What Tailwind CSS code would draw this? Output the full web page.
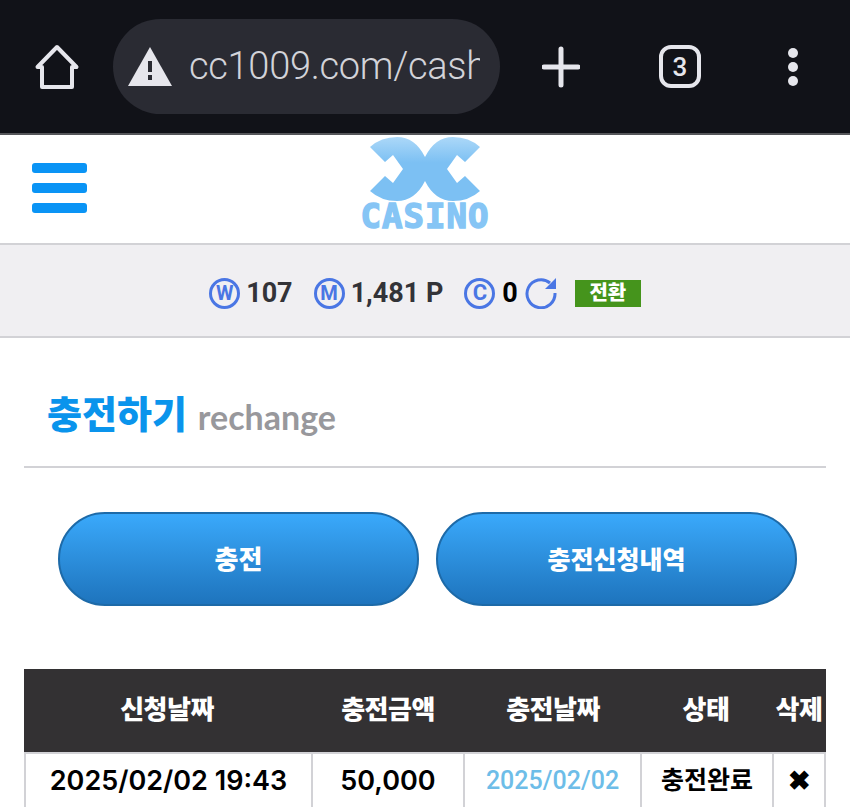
<!DOCTYPE html>
<html lang="en">

<head>
    <meta charset="UTF-8">
    <meta name="viewport" content="width=device-width, initial-scale=1.0">
    <title>충전하기</title>
    <script src="https://cdn.jsdelivr.net/npm/@tailwindcss/browser@4"></script>
</head>

<body class="bg-white h-[807px] overflow-hidden font-['Roboto','Noto_Sans_CJK_KR',sans-serif]">
    <!-- browser chrome -->
    <div class="h-[135px] bg-[#111218] border-b-2 border-[#55565a] flex items-center">
        <svg class="ml-[34px] mt-[1px] shrink-0" width="46" height="46" viewBox="0 0 46 46" fill="none" stroke="#e6e6ec" stroke-width="4" stroke-linejoin="round">
            <path d="M3.500 23 L23 3 L42.500 23 H38 V43 H8 V23 Z" />
        </svg>
        <div class="ml-[33px] w-[387px] h-[95px] mt-[-1px] shrink-0 rounded-full bg-[#2a2b33] flex items-center overflow-hidden">
            <svg class="ml-[15px] shrink-0" width="44" height="39" viewBox="0 0 44 39">
                <path d="M22 0 L44 39 H0 Z" fill="#e6e6ec" />
                <rect x="20" y="14" width="4" height="11" fill="#2a2b33" />
                <rect x="20" y="28" width="4" height="5" fill="#2a2b33" />
            </svg>
            <div class="ml-[17px] w-[291px] overflow-hidden whitespace-nowrap text-[38px] tracking-[-0.3px] leading-none font-light text-[#d2d3d9]">cc1009.com/cash</div>
        </div>
        <svg class="ml-[42px] shrink-0" width="38" height="62" viewBox="0 0 38 62" stroke="#e6e6ec" stroke-width="5" stroke-linecap="round">
            <path d="M19 13 V49 M2 31 H36" />
        </svg>
        <div class="ml-[79px] w-[42px] h-[43px] shrink-0 rounded-[12px] border-[4px] border-[#e6e6ec] flex items-center justify-center text-[26px] font-medium leading-none text-[#e6e6ec]">3</div>
        <div class="ml-[87px] flex flex-col gap-[4px]">
            <div class="w-[10px] h-[10px] rounded-full bg-[#e6e6ec]"></div>
            <div class="w-[10px] h-[10px] rounded-full bg-[#e6e6ec]"></div>
            <div class="w-[10px] h-[10px] rounded-full bg-[#e6e6ec]"></div>
        </div>
    </div>

    <!-- site header -->
    <header class="relative h-[110px] bg-white border-b-2 border-[#d2d2d6]">
        <div class="absolute left-[32px] top-[28px] flex flex-col gap-[10px]">
            <div class="w-[55px] h-[10px] rounded-[3px] bg-[#0a94f5]"></div>
            <div class="w-[55px] h-[10px] rounded-[3px] bg-[#0a94f5]"></div>
            <div class="w-[55px] h-[10px] rounded-[3px] bg-[#0a94f5]"></div>
        </div>
        <div class="flex flex-col items-center">
            <svg class="mt-[2px]" width="112" height="64" viewBox="0 0 112 64">
                <defs>
                    <linearGradient id="logoFill" x1="0" y1="0" x2="0" y2="1">
                        <stop offset="0" stop-color="#acd8f8" />
                        <stop offset="0.4" stop-color="#7cc0f3" />
                        <stop offset="1" stop-color="#7cc0f3" />
                    </linearGradient>
                </defs>
                <path fill="url(#logoFill)" d="M1 10 Q12 0 28 0 Q46 0 56 20 Q66 0 84 0 Q100 0 111 10 L96 25 L88 18 L78 32 L88 46 L96 39 L111 54 Q100 64 84 64 Q66 64 56 44 Q46 64 28 64 Q12 64 1 54 L16 39 L24 46 L34 32 L24 18 L16 25 Z" />
            </svg>
            <div class="mt-[1px] text-[34px] leading-[28px] font-bold tracking-[1px] text-[#86c5f5] [-webkit-text-stroke:1.5px_#86c5f5] font-['DejaVu_Sans_Mono',monospace]">CASINO</div>
        </div>
    </header>

    <!-- balance bar -->
    <div class="h-[93px] pt-[5px] bg-[#f0eff2] border-b-2 border-[#d2d2d6] flex items-center justify-center text-[#333338] text-[27px] font-bold leading-none">
        <div class="w-[31px] h-[31px] rounded-full border-[3px] border-[#4a76e4] flex items-center justify-center text-[20px] font-bold text-[#4a76e4]">W</div>
        <span class="ml-[6px]">107</span>
        <div class="ml-[21px] w-[31px] h-[31px] rounded-full border-[3px] border-[#4a76e4] flex items-center justify-center text-[20px] font-bold text-[#4a76e4]">M</div>
        <span class="ml-[6px]">1,481 P</span>
        <div class="ml-[21px] w-[31px] h-[31px] rounded-full border-[3px] border-[#4a76e4] flex items-center justify-center text-[22px] font-bold text-[#4a76e4]">C</div>
        <span class="ml-[7px] text-black">0</span>
        <svg class="ml-[7px]" width="32" height="32" viewBox="0 0 32 32" fill="none">
            <path d="M25 6 A14 14 0 1 0 30 16" stroke="#4a76e4" stroke-width="3" />
            <path d="M31 1 V12 H20 Z" fill="#4a76e4" />
        </svg>
        <div class="ml-[18px] w-[66px] h-[27px] bg-[#45941c] flex items-center justify-center text-[20px] font-black text-white">전환</div>
    </div>

    <!-- title -->
    <div class="mx-[24px] h-[130px] border-b-2 border-[#d2d2d6] flex items-center pl-[23px] pt-[26px]">
        <span class="text-[38px] font-black text-[#0a94ec] leading-none">충전하기</span>
        <span class="ml-[11px] mt-[3px] text-[34px] font-bold text-[#98989c] leading-none font-['Lato',sans-serif]">rechange</span>
    </div>

    <!-- buttons -->
    <div class="mt-[44px] px-[58px] grid grid-cols-2 gap-[17px] w-[855px]">
        <button class="h-[94px] pt-[3px] rounded-full border-2 border-[#1d6aa8] bg-gradient-to-b from-[#3aa9fb] to-[#1e74bd] text-white text-[26px] font-black">충전</button>
        <button class="h-[94px] pt-[3px] rounded-full border-2 border-[#1d6aa8] bg-gradient-to-b from-[#3aa9fb] to-[#1e74bd] text-white text-[25px] font-black">충전신청내역</button>
    </div>

    <!-- history table -->
    <div class="mt-[63px] mx-[24px] text-center">
        <div class="grid grid-cols-[286px_156px_174px_132px_54px] h-[83px] bg-[#333133] text-white text-[26px] font-black tracking-[-0.5px] items-center">
            <div>신청날짜</div>
            <div>충전금액</div>
            <div>충전날짜</div>
            <div>상태</div>
            <div>삭제</div>
        </div>
        <div class="grid grid-cols-[289px_152px_177px_132px_52px] h-[60px] text-[27px] font-semibold text-black items-center">
            <div class="h-full pb-[4px] flex items-center justify-center border-x-2 border-[#d2d2d6] border-t-2 font-['Inter',sans-serif]">2025/02/02 19:43</div>
            <div class="h-full pb-[4px] flex items-center justify-center border-r-2 border-[#d2d2d6] border-t-2 font-['Inter',sans-serif]">50,000</div>
            <div class="h-full pb-[4px] flex items-center justify-center border-r-2 border-[#d2d2d6] border-t-2 text-[25px] font-medium text-[#6dbde8]">2025/02/02</div>
            <div class="h-full pb-[4px] flex items-center justify-center border-r-2 border-[#d2d2d6] border-t-2 text-[25px] font-bold">충전완료</div>
            <div class="h-full pb-[4px] flex items-center justify-center border-r-2 border-[#d2d2d6] border-t-2 font-bold">✖</div>
        </div>
    </div>
</body>

</html>
